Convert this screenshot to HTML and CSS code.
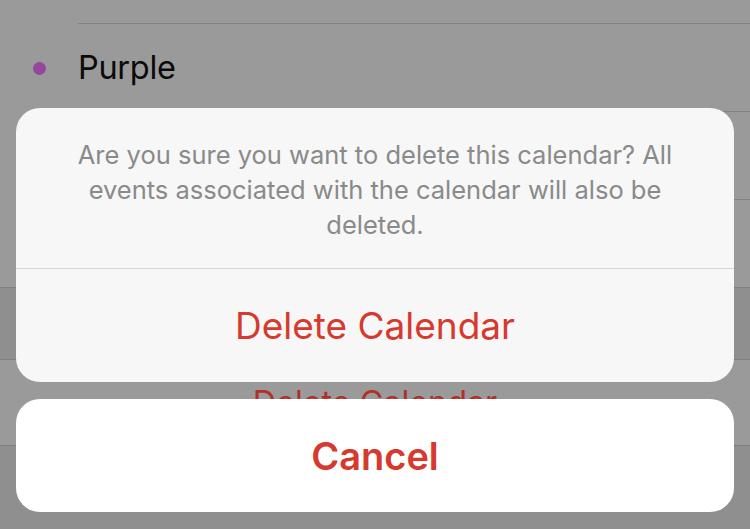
FILE: index.html
```html
<!DOCTYPE html>
<html>
<head>
<meta charset="utf-8">
<link rel="stylesheet" href="styles.css">
</head>
<body>
<div class="screen">
  <div class="list">
    <div class="row row-top"><div class="lead"></div><div class="cell"></div></div>
    <div class="row"><div class="lead"><span class="dot"></span></div><div class="cell"><span class="label">Purple</span></div></div>
    <div class="row"><div class="lead"></div><div class="cell"></div></div>
    <div class="row row-last"><div class="lead"></div><div class="cell"></div></div>
  </div>
  <div class="gap"></div>
  <div class="danger-cell"><span class="danger-text">Delete Calendar</span></div>

  <div class="sheet-wrap">
    <div class="sheet sheet-main">
      <p class="message">Are you sure you want to delete this calendar? All events associated with the calendar will also be deleted.</p>
      <div class="action">Delete Calendar</div>
    </div>
    <div class="sheet sheet-cancel">
      <div class="action cancel">Cancel</div>
    </div>
  </div>
</div>
</body>
</html>
```

FILE: styles.css
```css
* { box-sizing: border-box; }
html, body { margin: 0; padding: 0; }
body {
  width: 750px;
  height: 529px;
  overflow: hidden;
  background: #8f8f8f;
  font-family: "Inter", "Roboto", "Liberation Sans", sans-serif;
}
.screen {
  position: relative;
  width: 750px;
  height: 529px;
}
.list {
  background: #9a9a9a;
  border-bottom: 1px solid #808080;
}
.row {
  display: flex;
  height: 88px;
}
.row-top { height: 24px; }
.lead {
  width: 78px;
  flex: none;
  display: flex;
  align-items: center;
  justify-content: center;
}
.cell {
  flex: 1;
  border-bottom: 1px solid #828282;
  display: flex;
  align-items: center;
}
.row-last .cell { border-bottom: none; }
.row-last { height: 87px; }
.dot {
  width: 13px;
  height: 13px;
  border-radius: 50%;
  background: #94479d;
}
.label {
  font-size: 32.5px;
  color: #0b0b0b;
  letter-spacing: -0.3px;
}
.gap {
  height: 71px;
}
.danger-cell {
  height: 87px;
  background: #9a9a9a;
  border-top: 1px solid #808080;
  border-bottom: 1px solid #808080;
  display: flex;
  align-items: center;
  justify-content: center;
}
.danger-text {
  font-size: 32.3px;
  color: #b32f26;
}
.sheet-wrap {
  position: absolute;
  left: 16px;
  right: 16px;
  bottom: 17px;
  display: flex;
  flex-direction: column;
  gap: 17px;
}
.sheet {
  border-radius: 24px;
  overflow: hidden;
}
.sheet-main { background: #f7f7f7; }
.sheet-cancel { background: #ffffff; }
.message {
  margin: 0;
  padding: 29px 46px 26px;
  text-align: center;
  font-size: 25.5px;
  line-height: 35px;
  color: #8a8a8a;
  border-bottom: 1px solid #d6d6d6;
}
.action {
  height: 113px;
  display: flex;
  align-items: center;
  justify-content: center;
  font-size: 37px;
  color: #d6392d;
}
.cancel {
  font-weight: 600;
  font-size: 38px;
}
```
